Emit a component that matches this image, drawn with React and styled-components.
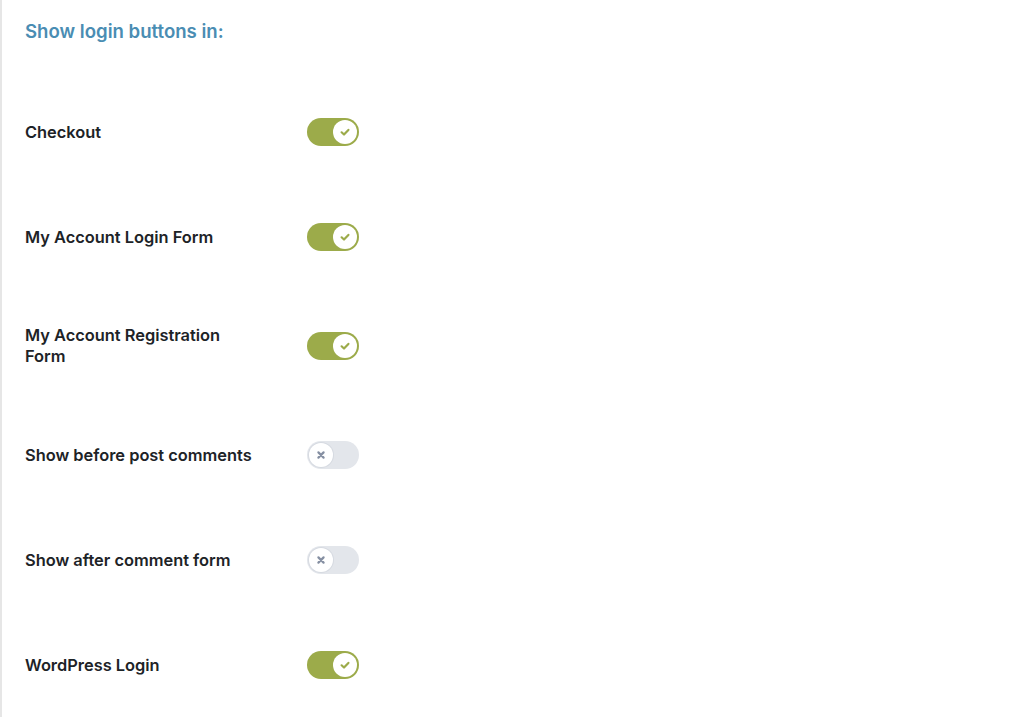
import { useState } from "react";
import styled, { createGlobalStyle } from "styled-components";

const GlobalStyle = createGlobalStyle`
  html, body {
    margin: 0;
    padding: 0;
    background: #ffffff;
  }
  body {
    font-family: Inter, "Noto Sans", "Liberation Sans", sans-serif;
    color: #1d2327;
  }
`;

const Page = styled.div`
  min-height: 717px;
  box-sizing: border-box;
  border-left: 2px solid #e6e6e6;
  padding: 19px 0 0 23px;
`;

const Heading = styled.h2`
  margin: 0 0 37px;
  font-size: 18.6px;
  line-height: 24px;
  font-weight: 600;
  color: #4a8db3;
`;

const List = styled.div`
  display: flex;
  flex-direction: column;
`;

const Row = styled.div`
  display: flex;
  align-items: center;
  padding: 35px 0 36px;
  min-height: 34px;
`;

const Label = styled.div`
  width: 230px;
  margin-right: 52px;
  font-size: 16.4px;
  line-height: 21px;
  font-weight: 600;
  color: #1d2327;
`;

const Track = styled.button`
  position: relative;
  width: 52px;
  height: 28px;
  padding: 0;
  border: none;
  border-radius: 14px;
  cursor: pointer;
  background: ${p => (p.on ? "#9cab4a" : "#e3e6eb")};
  transition: background 0.15s;
`;

const Knob = styled.span`
  position: absolute;
  top: 2px;
  left: ${p => (p.on ? "26px" : "2px")};
  width: 24px;
  height: 24px;
  border-radius: 50%;
  background: #ffffff;
  box-shadow: ${p => (p.on ? "none" : "0 0 0 1px #d6dae1")};
  display: flex;
  align-items: center;
  justify-content: center;
  transition: left 0.15s;
`;

function Check() {
  return (
    <svg width="14" height="14" viewBox="0 0 14 14">
      <path d="M3.6 7.3 L6 9.5 L10.4 4.9" fill="none" stroke="#9cab4a" strokeWidth="2.2" strokeLinecap="round" strokeLinejoin="round" />
    </svg>
  );
}

function Cross() {
  return (
    <svg width="14" height="14" viewBox="0 0 14 14">
      <path d="M4.4 4.4 L9.6 9.6 M9.6 4.4 L4.4 9.6" fill="none" stroke="#858fa2" strokeWidth="2.2" strokeLinecap="round" />
    </svg>
  );
}

function Toggle({ on, onChange }) {
  return (
    <Track on={on} onClick={onChange} aria-pressed={on}>
      <Knob on={on}>{on ? <Check /> : <Cross />}</Knob>
    </Track>
  );
}

const initial = [
  { id: "checkout", label: "Checkout", on: true },
  { id: "account_login", label: "My Account Login Form", on: true },
  { id: "account_register", label: "My Account Registration Form", on: true },
  { id: "before_comments", label: "Show before post comments", on: false },
  { id: "after_comments", label: "Show after comment form", on: false },
  { id: "wp_login", label: "WordPress Login", on: true },
];

export default function App() {
  const [items, setItems] = useState(initial);

  function flip(id) {
    setItems(items.map(i => (i.id === id ? { ...i, on: !i.on } : i)));
  }

  return (
    <>
      <GlobalStyle />
      <Page>
        <Heading>Show login buttons in:</Heading>
        <List>
          {items.map(item => (
            <Row key={item.id}>
              <Label>{item.label}</Label>
              <Toggle on={item.on} onChange={() => flip(item.id)} />
            </Row>
          ))}
        </List>
      </Page>
    </>
  );
}
